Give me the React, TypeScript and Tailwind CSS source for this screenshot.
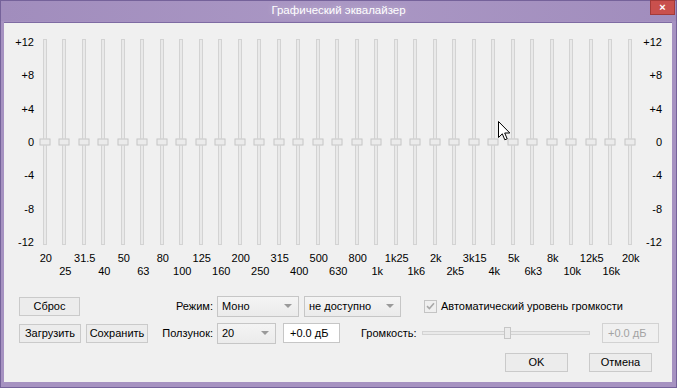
import React from 'react';

const bands = [
    '20', '25', '31.5', '40', '50', '63', '80', '100', '125', '160', '200', '250', '315', '400', '500', '630',
    '800', '1k', '1k25', '1k6', '2k', '2k5', '3k15', '4k', '5k', '6k3', '8k', '10k', '12k5', '16k', '20k',
];
const levels = ['+12', '+8', '+4', '0', '-4', '-8', '-12'];

const Button = ({ label, w }: { label: string; w: string }) => (
    <div className={`${w} h-[19px] flex items-center justify-center border border-[#cacaca] bg-[#ececec] text-black`}>
        {label}
    </div>
);

const Combo = ({ value, w }: { value: string; w: string }) => (
    <div className={`${w} h-[21px] flex items-center justify-between pl-[4px] pr-[6px] border border-[#c6c6c6] bg-gradient-to-b from-[#f4f4f4] to-[#ebebeb] text-black`}>
        <span>{value}</span>
        <span className="w-0 h-0 border-l-[4px] border-r-[4px] border-t-[4px] border-l-transparent border-r-transparent border-t-[#9a9a9a]" />
    </div>
);

const BandSlider = () => (
    <div className="w-[19.5px] h-[212px] flex justify-center py-[3px]">
        <div className="relative w-[4px] h-full border border-[#d3d3d3] bg-[#e9e9e9]">
            <div className="absolute left-1/2 top-1/2 -translate-x-1/2 -translate-y-1/2 w-[11px] h-[7px] border border-[#c6c6c6] bg-[#ebebeb]" />
        </div>
    </div>
);

export default function App() {
    return (
        <div className="relative w-[677px] h-[388px] flex flex-col bg-[#a692c1] border border-[#75629a] font-['Liberation_Sans',Arial,sans-serif] text-[11px] leading-none select-none">
            {/* Title bar */}
            <div className="relative h-[20px] shrink-0 flex items-center justify-center bg-gradient-to-r from-[#a18dbd] via-[#aa97c4] to-[#a18dbd]">
                <span className="text-white text-[11.5px] [text-shadow:0_0_6px_rgba(255,255,255,0.35)]">Графический эквалайзер</span>
                <div className="absolute right-[1px] top-[-1px] w-[25px] h-[15px] flex items-center justify-center bg-[#c9504d] border border-[#a33a38] text-white text-[11px] font-bold">
                    ×
                </div>
            </div>

            {/* Client area */}
            <div className="ml-[3px] mt-[1px] w-[668px] h-[360px] bg-[#f0f0f0] border-t border-[#7e6ba3] text-black">
                {/* Sliders */}
                <div className="flex mt-[13px]">
                    <div className="w-[31px] h-[212px] flex flex-col justify-between items-end pr-[1px]">
                        {levels.map((l) => (
                            <span key={l} className="h-[12px] leading-[12px]">{l}</span>
                        ))}
                    </div>
                    <div className="flex">
                        {bands.map((b) => (
                            <BandSlider key={b} />
                        ))}
                    </div>
                    <div className="w-[22.5px] h-[212px] flex flex-col justify-between items-end">
                        {levels.map((l) => (
                            <span key={l} className="h-[12px] leading-[12px]">{l}</span>
                        ))}
                    </div>
                </div>

                {/* Frequency labels */}
                <div className="flex ml-[32px] mt-[4px]">
                    {bands.map((b, i) => (
                        <div key={b} className="w-[19.5px] h-[26px] flex flex-col items-center">
                            <span className={`whitespace-nowrap leading-[13px] ${i % 2 === 1 ? 'mt-[13px]' : ''}`}>{b}</span>
                        </div>
                    ))}
                </div>

                {/* Row 1 */}
                <div className="flex items-center h-[22px] mt-[17px] pl-[15px]">
                    <Button label="Сброс" w="w-[61px]" />
                    <div className="w-[133px] text-right">Режим:</div>
                    <div className="ml-[4px]"><Combo value="Моно" w="w-[82px]" /></div>
                    <div className="ml-[5px]"><Combo value="не доступно" w="w-[97px]" /></div>
                    <div className="ml-[23px] w-[13px] h-[13px] flex items-center justify-center border border-[#c4c4c4] bg-[#efefef]">
                        <svg width="9" height="8" viewBox="0 0 9 8">
                            <path d="M1 4.2 L3.4 6.5 L8 1.3" stroke="#a8a8a8" strokeWidth="1.6" fill="none" />
                        </svg>
                    </div>
                    <span className="ml-[4px]">Автоматический уровень громкости</span>
                </div>

                {/* Row 2 */}
                <div className="flex items-center h-[22px] mt-[5px] pl-[15px]">
                    <Button label="Загрузить" w="w-[62px]" />
                    <div className="ml-[5px]"><Button label="Сохранить" w="w-[62px]" /></div>
                    <div className="w-[65px] text-right">Ползунок:</div>
                    <div className="ml-[4px]"><Combo value="20" w="w-[59px]" /></div>
                    <div className="ml-[7px] w-[57px] h-[20px] flex items-center pl-[6px] border border-[#c6c6c6] bg-white">+0.0 дБ</div>
                    <span className="ml-[21px] w-[57px]">Громкость:</span>
                    <div className="relative ml-[4px] w-[168px] h-[4px] border border-[#d3d3d3] bg-[#e9e9e9]">
                        <div className="absolute left-[81px] top-1/2 -translate-y-1/2 w-[7px] h-[12px] border border-[#c6c6c6] bg-[#ebebeb]" />
                    </div>
                    <div className="ml-[12px] w-[57px] h-[20px] flex items-center pl-[5px] border border-[#d2d2d2] bg-[#f0f0f0] text-[#a3a3a3]">+0.0 дБ</div>
                </div>

                {/* Row 3 */}
                <div className="flex justify-end gap-[21px] mt-[9px] pr-[20px]">
                    <Button label="OK" w="w-[63px]" />
                    <Button label="Отмена" w="w-[63px]" />
                </div>
            </div>

            {/* Mouse pointer */}
            <svg className="absolute left-[497px] top-[120px]" width="13" height="21" viewBox="0 0 13 21">
                <path d="M0.5 0.5 L0.5 16.5 L4.3 12.8 L6.8 18.8 L9.2 17.8 L6.7 12 L11.8 12 Z" fill="white" stroke="black" strokeWidth="1" strokeLinejoin="round" />
            </svg>
        </div>
    );
}
